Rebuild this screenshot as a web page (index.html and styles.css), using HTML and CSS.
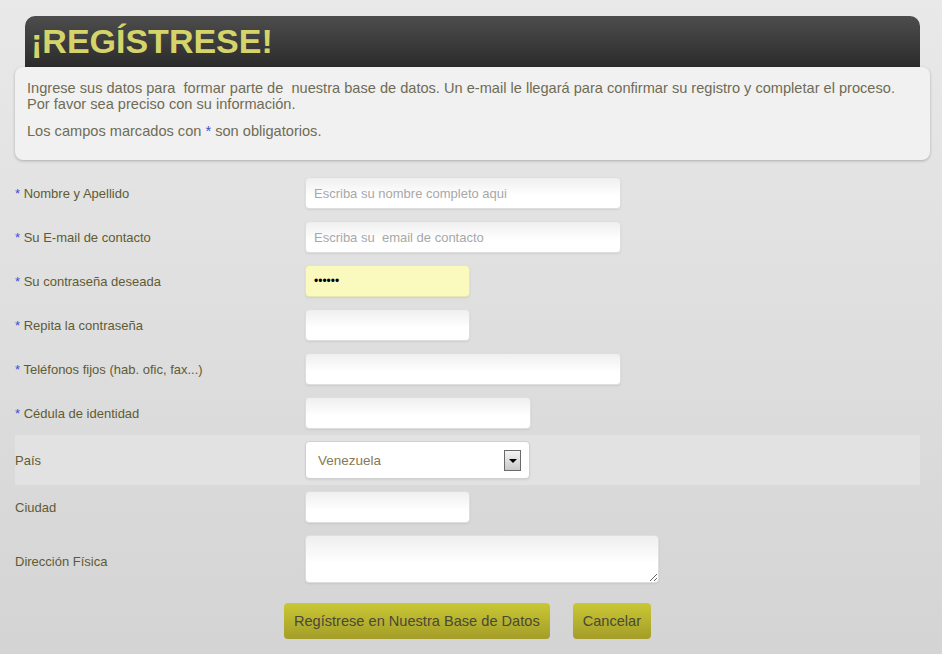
FILE: index.html
```html
<!DOCTYPE html>
<html lang="es">
<head>
  <meta charset="UTF-8" />
  <meta name="viewport" content="width=device-width, initial-scale=1.0"/>
  <title>Regístrese</title>
  <link rel="stylesheet" href="styles.css">
</head>
<body>

  <div class="header">
    <h1>¡REGÍSTRESE!</h1>
  </div>

  <div class="intro">
    <p>Ingrese sus datos para &nbsp;formar parte de &nbsp;nuestra base de datos. Un e-mail le llegará para confirmar su registro y completar el proceso.<br>
    Por favor sea preciso con su información.</p>
    <p>Los campos marcados con <span class="req">*</span> son obligatorios.</p>
  </div>

  <form class="form" onsubmit="return false">
    <div class="row">
      <label><span class="req">*</span> Nombre y Apellido</label>
      <input type="text" class="wide" placeholder="Escriba su nombre completo aqui">
    </div>
    <div class="row">
      <label><span class="req">*</span> Su E-mail de contacto</label>
      <input type="text" class="wide" placeholder="Escriba su &nbsp;email de contacto">
    </div>
    <div class="row">
      <label><span class="req">*</span> Su contraseña deseada</label>
      <input type="password" class="short filled" value="secret">
    </div>
    <div class="row">
      <label><span class="req">*</span> Repita la contraseña</label>
      <input type="password" class="short">
    </div>
    <div class="row">
      <label><span class="req">*</span> Teléfonos fijos (hab. ofic, fax...)</label>
      <input type="text" class="wide">
    </div>
    <div class="row">
      <label><span class="req">*</span> Cédula de identidad</label>
      <input type="text" class="mid">
    </div>
    <div class="row row-hl">
      <label>País</label>
      <div class="select-wrap">
        <select>
          <option>Venezuela</option>
          <option>Colombia</option>
          <option>Argentina</option>
        </select>
        <span class="arrow"></span>
      </div>
    </div>
    <div class="row">
      <label>Ciudad</label>
      <input type="text" class="short">
    </div>
    <div class="row">
      <label class="low">Dirección Física</label>
      <textarea></textarea>
    </div>

    <div class="buttons">
      <button type="submit">Regístrese en Nuestra Base de Datos</button>
      <button type="button">Cancelar</button>
    </div>
  </form>

</body>
</html>
```

FILE: styles.css
```css
* {
  box-sizing: border-box;
  margin: 0;
  padding: 0;
}

html {
  background: linear-gradient(to bottom, #e9e9e9, #d4d4d4);
  min-height: 100%;
}

body {
  font-family: "Liberation Sans", Arial, sans-serif;
  padding-top: 16px;
  min-height: 654px;
}

.header {
  margin-left: 25px;
  width: 895px;
  height: 51px;
  background: linear-gradient(to bottom, #4d4d4d, #2b2b2b);
  border-top-left-radius: 10px;
  border-top-right-radius: 10px;
  padding: 5px 0 0 6px;
}

.header h1 {
  font-size: 34px;
  line-height: 40px;
  font-weight: bold;
  color: #d4d46a;
}

.intro {
  margin-left: 15px;
  width: 915px;
  background: #f1f1f1;
  border-radius: 8px;
  box-shadow: 0 1px 3px rgba(0, 0, 0, 0.25);
  padding: 13px 12px 21px;
  color: #6f6c55;
  font-size: 14.6px;
  line-height: 16px;
}

.intro p + p {
  margin-top: 11px;
}

.req {
  color: #3b4fd4;
}

.form {
  margin: 11px 0 0 15px;
  width: 905px;
}

.row {
  display: flex;
  align-items: center;
  padding: 6px 0;
}

.row label {
  width: 290px;
  font-size: 13px;
  color: #5f5b32;
}

.row label.low {
  padding-top: 4px;
}

.row-hl {
  background: #e2e2e2;
}

input,
textarea,
.select-wrap {
  font-family: "Liberation Sans", Arial, sans-serif;
  font-size: 13px;
  height: 32px;
  border: 1px solid #dedede;
  border-radius: 4px;
  background: linear-gradient(to bottom, #efefef, #ffffff 60%);
  box-shadow: 0 1px 2px rgba(0, 0, 0, 0.08);
  padding: 0 8px;
  color: #555;
  outline: none;
}

input::placeholder {
  color: #a8a8a8;
}

.wide { width: 316px; }
.mid { width: 226px; }
.short { width: 165px; }

.filled {
  background: #fafabe;
  border-color: #e6e6b0;
  color: #000;
  font-size: 12px;
}

textarea {
  width: 354px;
  height: 48px;
  padding: 6px 8px;
  resize: both;
}

.select-wrap {
  position: relative;
  width: 225px;
  height: 38px;
  padding: 0;
  background: #fff;
  border-color: #d0d0d0;
}

.select-wrap select {
  width: 100%;
  height: 100%;
  border: none;
  background: transparent;
  appearance: none;
  -webkit-appearance: none;
  font-family: "Liberation Sans", Arial, sans-serif;
  font-size: 13.5px;
  color: #8a7852;
  padding-left: 12px;
  outline: none;
}

/* little dropdown button drawn over the select */
.arrow {
  position: absolute;
  right: 8px;
  top: 8px;
  width: 17px;
  height: 21px;
  border: 1px solid #6a6a6a;
  background: linear-gradient(to bottom, #f4f4f4, #c8c8c8);
  pointer-events: none;
}

.arrow::after {
  content: "";
  position: absolute;
  left: 4px;
  top: 8px;
  border-left: 4px solid transparent;
  border-right: 4px solid transparent;
  border-top: 4px solid #000;
}

.buttons {
  display: flex;
  justify-content: center;
  gap: 23px;
  margin-top: 14px;
}

button {
  height: 36px;
  padding: 0 10px;
  font-family: "Liberation Sans", Arial, sans-serif;
  font-size: 14.6px;
  color: #4a4838;
  border: none;
  border-radius: 4px;
  background: linear-gradient(to bottom, #c9c834, #a49d29);
  cursor: pointer;
}

button:hover {
  opacity: 0.9;
}
```
